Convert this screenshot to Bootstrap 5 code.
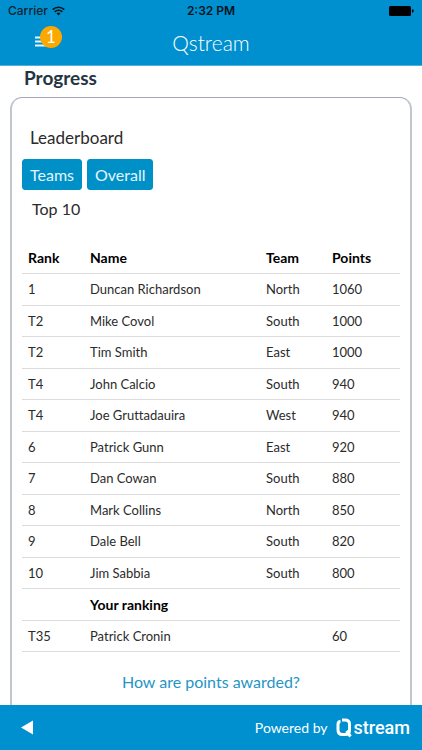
<!DOCTYPE html>
<html lang="en">
<head>
<meta charset="utf-8">
<meta name="viewport" content="width=device-width, initial-scale=1">
<title>Qstream</title>
<link href="https://cdn.jsdelivr.net/npm/bootstrap@5.3.0/dist/css/bootstrap.min.css" rel="stylesheet">
<style>
:root { --brand: #0090d0; }
body { font-family: Lato, sans-serif; font-variant-ligatures: none; color: #2b2b2b; background: #fff; }
.bg-brand { background: var(--brand); }
.status-bar { font: 500 12px/22px Inter, sans-serif; color: #10222c; }
.status-bar .clock { font-weight: 600; color: #06141c; }
.title-bar { height: 44px; border-bottom: 1px solid #4fb0dc; }
.app-title { font-size: 21px; line-height: 42px; font-weight: 300; }
.menu-btn { left: 34px; top: 9px; line-height: 0; }
.menu-badge { left: 6px; top: -5px; width: 22px; height: 22px; background: #fba800; font-size: 17px; line-height: 22px; }
.page-heading { font-size: 19px; line-height: 23px; color: #263442; }
.board { margin-left: 10px; margin-right: 10px; border: 2px solid #c2c7ce; border-top: 1px solid #a3a8b8; border-bottom: 0; border-radius: 12px 12px 0 0; padding: 27px 10px 0; }
.board-title { font-size: 17px; line-height: 26px; padding-left: 8px; }
.board-note { font-size: 16px; line-height: 20px; padding-left: 10px; margin: 9px 0 23px; }
.board-tabs { gap: 5px; }
.btn-board { --bs-btn-color: #e4f6fd; --bs-btn-bg: #0090c8; --bs-btn-border-color: #0090c8; --bs-btn-hover-color: #fff; --bs-btn-hover-bg: #007db0; --bs-btn-hover-border-color: #007db0; --bs-btn-padding-x: 7px; --bs-btn-padding-y: 3px; --bs-btn-border-radius: 3px; --bs-btn-font-size: 16px; line-height: 23px; }
.ranks { table-layout: fixed; font-size: 13px; line-height: 21px; --bs-table-color: #2b2b2b; --bs-table-bg: transparent; }
.ranks > :not(caption) > * > * { padding: 5px 6px; border-bottom: 1px solid #dcdcdc; }
.ranks tbody tr:nth-child(even) > * { padding-bottom: 4px; }
.ranks th { color: #000; font-weight: 700; font-size: 14px; }
.c-rank { width: 62px; } .c-team { width: 66px; } .c-points { width: 74px; }
.help-link { font-size: 16px; line-height: 28px; color: #2595c5; }
.foot { height: 45px; padding: 0 12px 0 20px; }
.powered { font-size: 14px; }
.wordmark { font: 500 18px/24px Roboto, sans-serif; }
</style>
<script src="https://cdn.jsdelivr.net/npm/bootstrap@5.3.0/dist/js/bootstrap.bundle.min.js"></script>
</head>
<body>
<div class="d-flex flex-column min-vh-100">
  <header class="bg-brand">
    <div class="status-bar row g-0 px-2">
      <div class="col d-flex align-items-center gap-1"><span>Carrier</span>
        <svg width="13" height="10" viewBox="0 0 13 10" fill="none" stroke="#06141c" stroke-width="1.7" aria-hidden="true"><path d="M.7 3.6a8.3 8.3 0 0 1 11.6 0M2.7 5.8a5.4 5.4 0 0 1 7.6 0"/><path d="M4.5 7.5a2.8 2.8 0 0 1 4 0L6.500 9.600z" fill="#06141c" stroke="none"/></svg>
      </div>
      <div class="col-auto clock">2:32 PM</div>
      <div class="col d-flex align-items-center justify-content-end">
        <svg width="25" height="10" viewBox="0 0 25 10" aria-hidden="true"><rect width="22" height="10" rx="1.500"/><path d="M23 3.300q1.800.3 1.800 1.700T23 6.700z"/></svg>
      </div>
    </div>
    <div class="title-bar position-relative text-center text-white">
      <button type="button" class="menu-btn btn p-0 border-0 position-absolute" aria-label="Menu, 1 notification">
        <svg width="16" height="16" viewBox="0 0 16 16" stroke="#e4f6ff" stroke-width="1.800" aria-hidden="true"><path d="M1 6.500h14M1 10.500h14M1 14.500h14"/></svg>
        <span class="menu-badge position-absolute rounded-circle text-white">1</span>
      </button>
      <h1 class="app-title m-0">Qstream</h1>
    </div>
  </header>
  <main class="flex-grow-1 d-flex flex-column">
    <h2 class="page-heading fw-bold m-0 ps-4 pb-2">Progress</h2>
    <section class="board flex-grow-1">
      <h3 class="board-title fw-normal m-0 mb-2">Leaderboard</h3>
      <div class="board-tabs d-flex">
        <button type="button" class="btn btn-board">Teams</button>
        <button type="button" class="btn btn-board">Overall</button>
      </div>
      <p class="board-note">Top 10</p>
      <table class="table ranks mb-3">
        <colgroup><col class="c-rank"><col><col class="c-team"><col class="c-points"></colgroup>
        <thead><tr><th scope="col">Rank</th><th scope="col">Name</th><th scope="col">Team</th><th scope="col">Points</th></tr></thead>
        <tbody>
          <tr><td>1</td><td>Duncan Richardson</td><td>North</td><td>1060</td></tr>
          <tr><td>T2</td><td>Mike Covol</td><td>South</td><td>1000</td></tr>
          <tr><td>T2</td><td>Tim Smith</td><td>East</td><td>1000</td></tr>
          <tr><td>T4</td><td>John Calcio</td><td>South</td><td>940</td></tr>
          <tr><td>T4</td><td>Joe Gruttadauira</td><td>West</td><td>940</td></tr>
          <tr><td>6</td><td>Patrick Gunn</td><td>East</td><td>920</td></tr>
          <tr><td>7</td><td>Dan Cowan</td><td>South</td><td>880</td></tr>
          <tr><td>8</td><td>Mark Collins</td><td>North</td><td>850</td></tr>
          <tr><td>9</td><td>Dale Bell</td><td>South</td><td>820</td></tr>
          <tr><td>10</td><td>Jim Sabbia</td><td>South</td><td>800</td></tr>
          <tr><td></td><th scope="row">Your ranking</th><td></td><td></td></tr>
          <tr><td>T35</td><td>Patrick Cronin</td><td></td><td>60</td></tr>
        </tbody>
      </table>
      <div class="text-center"><a class="help-link d-inline-block text-decoration-none" href="#points">How are points awarded?</a></div>
    </section>
  </main>
  <footer class="foot bg-brand text-white d-flex align-items-center justify-content-between">
    <button type="button" class="btn p-0 border-0 d-flex" aria-label="Back"><svg width="13" height="15" viewBox="0 0 13 15" fill="#fff" aria-hidden="true"><path d="M13 .5v14L1 7.500z"/></svg></button>
    <div class="d-flex align-items-center gap-2">
      <span class="powered">Powered by</span>
      <span class="d-flex align-items-center" role="img" aria-label="Qstream">
        <svg width="18" height="20" viewBox="0 0 18 20" fill="none" stroke="#fff" stroke-width="3" aria-hidden="true"><path d="M4.500 3.200Q2 3.500 2 6.500V12q0 4.500 4.500 4.500H9q4.500 0 4.500-4.500V6q0-4-4.500-4H6M10.500 13l4 5.500"/></svg>
        <span class="wordmark">stream</span>
      </span>
    </div>
  </footer>
</div>
</body>
</html>
